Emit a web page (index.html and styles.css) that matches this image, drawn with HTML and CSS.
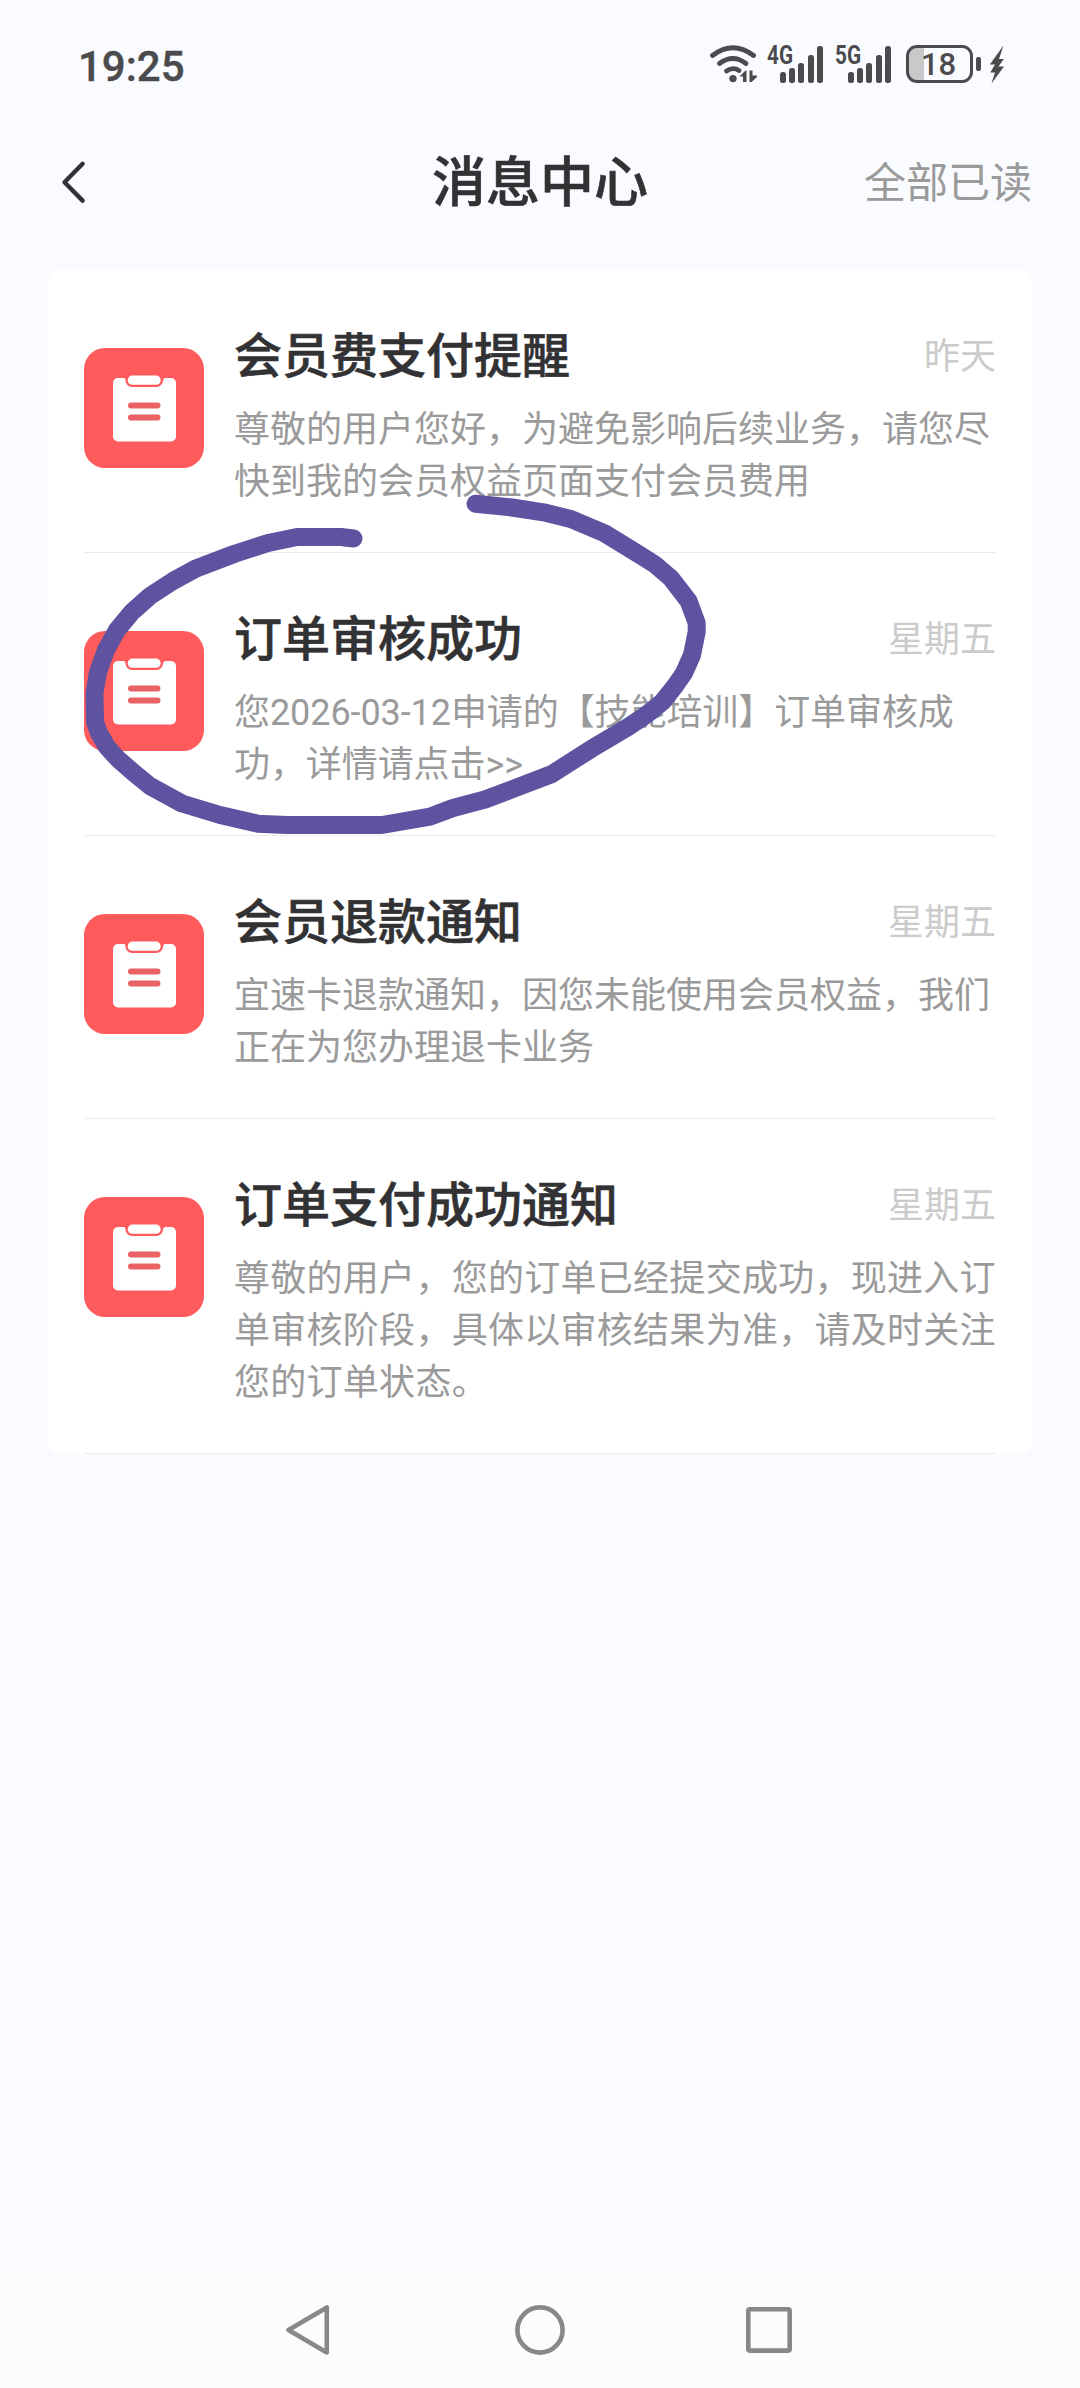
FILE: index.html
```html
<!DOCTYPE html>
<html lang="zh-CN">
<head>
<meta charset="utf-8">
<title>消息中心</title>
<link rel="stylesheet" href="styles.css">
</head>
<body>
<svg class="defs" width="0" height="0" aria-hidden="true">
  <symbol id="clipboard" viewBox="0 0 120 120">
    <rect width="120" height="120" rx="21" fill="#ff5a5c"/>
    <rect x="29" y="30" width="63" height="63.500" rx="5" fill="#fff"/>
    <path d="M40 29h41l-3 5H43z" fill="#ff5a5c"/>
    <rect x="41.500" y="25.500" width="37.500" height="13.500" rx="6.700" fill="#ff5a5c"/>
    <rect x="43.700" y="27.600" width="33" height="9.200" rx="4.600" fill="#fff"/>
    <path d="M47 57.500h26.500M47 69.400h26.500" stroke="#e96365" stroke-width="6" stroke-linecap="round"/>
  </symbol>
</svg>

<div class="screen">
  <header class="status">
    <span class="clock">19:25</span>
    <div class="indicators">
      <svg class="wifi" width="48" height="38" viewBox="710 45 48 38">
        <g fill="none" stroke="#4b4b4d" stroke-width="4.800" stroke-linecap="round">
          <path d="M712.500 55.500Q733 40 753.500 55.500"/>
          <path d="M719.500 63.500Q733 53.500 746 63.500"/>
          <path d="M726.500 71Q733 66.500 739 70.500"/>
        </g>
        <circle cx="733" cy="78.600" r="3.700" fill="#4b4b4d"/>
        <path d="M739.500 76.500 745.500 70.500h1v11.500h-3.500v-5.500zM749.500 70.500h3v5h4.500v1.500l-5.500 5h-2z" fill="#4b4b4d"/>
      </svg>
      <div class="signal signal-4g">
        <span class="gen">4G</span>
        <i></i><i></i><i></i><i></i><i></i>
      </div>
      <div class="signal signal-5g">
        <span class="gen">5G</span>
        <i></i><i></i><i></i><i></i><i></i>
      </div>
      <div class="battery"><span>18</span></div>
      <div class="battery-tip"></div>
      <svg class="bolt" width="16" height="39" viewBox="0 0 16 39">
        <path d="M14.500 .500 .800 19.500H6L1.300 27.500H6L2.500 38.500 15 21.500H9.500L14.800 14H10z" fill="#4b4b4d"/>
      </svg>
    </div>
  </header>

  <nav class="titlebar">
    <svg class="back" width="28" height="46" viewBox="60 158 28 46">
      <path d="M82.600 162.800 64.500 181.200 82.600 199.600" fill="none" stroke="#323234" stroke-width="4.400" stroke-linecap="round" stroke-linejoin="round"/>
    </svg>
    <h1>消息中心</h1>
    <span class="read-all">全部已读</span>
  </nav>

  <main class="list">
    <article class="item">
      <svg class="icon"><use href="#clipboard"/></svg>
      <div class="content">
        <div class="head"><h2>会员费支付提醒</h2><time>昨天</time></div>
        <p>尊敬的用户您好，为避免影响后续业务，请您尽快到我的会员权益页面支付会员费用</p>
      </div>
    </article>
    <article class="item">
      <svg class="icon"><use href="#clipboard"/></svg>
      <div class="content">
        <div class="head"><h2>订单审核成功</h2><time>星期五</time></div>
        <p class="tight">您2026-03-12申请的【技能培训】订单审核成功，详情请点击&gt;&gt;</p>
      </div>
    </article>
    <article class="item">
      <svg class="icon"><use href="#clipboard"/></svg>
      <div class="content">
        <div class="head"><h2>会员退款通知</h2><time>星期五</time></div>
        <p>宜速卡退款通知，因您未能使用会员权益，我们正在为您办理退卡业务</p>
      </div>
    </article>
    <article class="item">
      <svg class="icon"><use href="#clipboard"/></svg>
      <div class="content">
        <div class="head"><h2>订单支付成功通知</h2><time>星期五</time></div>
        <p class="loose">尊敬的用户，您的订单已经提交成功，现进入订单审核阶段，具体以审核结果为准，请及时关注您的订单状态。</p>
      </div>
    </article>
  </main>

  <footer class="navbar">
    <svg width="50" height="54" viewBox="284 2303 50 54"><path d="M327.800 2307.500V2352.500L289.500 2330z"/></svg>
    <svg width="54" height="54" viewBox="0 0 54 54"><circle cx="27" cy="27" r="22.600"/></svg>
    <svg width="50" height="54" viewBox="0 0 50 54"><rect x="4.300" y="6.200" width="41.400" height="41.400" rx="1.500"/></svg>
  </footer>

  <svg class="marker" width="1080" height="900" viewBox="0 0 1080 900">
    <path d="M353.500 538.500 341 537H297L268 543 234 554 196 568.500 173 581 150 596 132 612 117 630 106 650 98 672 94.500 693 95 722 99 733 107 747 118 759 134 773 150 786 182 803.500 220 815 258 823.700 286.700 825H382L430 816.700 453 808 485 799.500 519 786.700 552 774 590.600 749.300 627.700 727.300 646 715 662.600 701.700 675 686 684 673 692 655 696.700 631.700V623L688.700 601.300 671 578.300 655 564.500 637.300 553.300 604.500 533.300 570.800 519 543.500 512.300 512 507.500 475.500 503.700"/>
  </svg>
</div>
</body>
</html>
```
FILE: styles.css
```css
* { box-sizing: border-box; }

body {
  margin: 0;
  background: #fafbff;
  font-family: Roboto, "Noto Sans CJK SC", sans-serif;
  color: #323234;
}

h1, h2, p { margin: 0; }

.defs { position: absolute; }

.screen {
  position: relative;
  display: flex;
  flex-direction: column;
  width: 1080px;
  height: 2388px;
  overflow: hidden;
}

/* Status bar */
.status {
  display: flex;
  justify-content: space-between;
  height: 128px;
  padding: 0 75px 0 78px;
  color: #4b4b4d;
}

.clock {
  margin-top: 42px;
  font-size: 42px;
  line-height: 50px;
  font-weight: 500;
  -webkit-text-stroke: .4px;
}

.indicators {
  display: flex;
  align-items: flex-start;
  padding-top: 45px;
}

.signal {
  position: relative;
  display: flex;
  align-items: flex-end;
  gap: 3.300px;
  height: 38px;
  padding-left: 13px;
}

.signal-4g { margin-left: 9px; }
.signal-5g { margin-left: 12px; }

.signal i {
  width: 6px;
  border-radius: 2.500px;
  background: #4b4b4d;
}

.signal i:nth-of-type(1) { height: 11px; }
.signal i:nth-of-type(2) { height: 15px; }
.signal i:nth-of-type(3) { height: 20px; }
.signal i:nth-of-type(4) { height: 28px; }
.signal i:nth-of-type(5) { height: 37px; }

.gen {
  position: absolute;
  left: 0;
  top: 1px;
  font-size: 25px;
  line-height: 20px;
  font-weight: 700;
  transform: scaleX(.83);
  transform-origin: 0 0;
}

.battery {
  display: flex;
  align-items: center;
  justify-content: center;
  width: 67px;
  height: 38px;
  margin-left: 15px;
  border: 3.500px solid #4b4b4d;
  border-radius: 11px;
  background: linear-gradient(90deg, #c9c9cb 15px, transparent 15px);
  font-size: 31px;
  line-height: 32px;
  font-weight: 500;
}

.battery span { padding-top: 1px; padding-right: 2px; }

.battery-tip {
  width: 5px;
  height: 14px;
  margin: 12px 8px 0 3px;
  border-radius: 2px;
  background: #4b4b4d;
}

/* Title bar */
.titlebar {
  display: grid;
  grid-template-columns: 1fr auto 1fr;
  align-items: center;
  height: 108px;
  padding: 0 48px 0 60px;
}

.titlebar h1 {
  margin-right: 12px;
  padding-top: 4px;
  font-size: 54px;
  line-height: 80px;
  font-weight: 500;
  -webkit-text-stroke: .6px;
}

.read-all {
  justify-self: end;
  padding-top: 4px;
  font-size: 42px;
  line-height: 60px;
  color: #9a9a9b;
}

/* Message list */
.list {
  margin: 34px 48px 0;
  padding: 0 36px;
  border-radius: 12px;
  background: #fff;
}

.item {
  display: flex;
  align-items: flex-start;
  gap: 30px;
  padding: 51px 0 44px;
  border-bottom: 1px solid #ebebec;
}

.icon {
  flex: none;
  width: 120px;
  height: 120px;
  margin-top: 27px;
}

.content { flex: 1; min-width: 0; }

.head {
  display: flex;
  align-items: center;
  justify-content: space-between;
  height: 72px;
  margin-bottom: 11px;
}

.head h2 {
  font-size: 48px;
  line-height: 72px;
  font-weight: 500;
  -webkit-text-stroke: .6px;
}

.head time {
  font-size: 36px;
  line-height: 52px;
  color: #cbcbcc;
}

.item p {
  font-size: 36px;
  line-height: 52px;
  color: #9a9a9b;
}

.item .tight { letter-spacing: -.080px; }

.item .loose { letter-spacing: .280px; }

/* System navigation */
.navbar {
  display: flex;
  justify-content: center;
  align-items: center;
  gap: 177px;
  height: 116px;
  margin-top: auto;
  background: #fcfcfc;
}

.navbar svg {
  fill: none;
  stroke: #888;
  stroke-width: 4.600;
  stroke-linejoin: round;
}

.navbar svg:first-child {
  margin-left: -3px;
  margin-right: 3px;
}

/* Freehand highlight drawn over the page */
.marker {
  position: absolute;
  left: 0;
  top: 0;
  pointer-events: none;
}

.marker path {
  fill: none;
  stroke: #5f52a0;
  stroke-width: 18;
  stroke-linecap: round;
  stroke-linejoin: round;
}
```
